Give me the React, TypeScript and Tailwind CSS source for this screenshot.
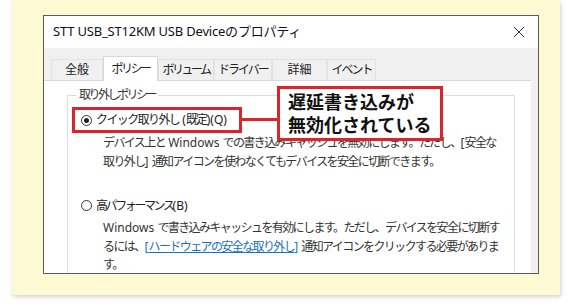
import React from "react";

const FONT = '"Noto Sans", "Noto Sans CJK JP", sans-serif';

function Radio({ checked }: { checked?: boolean }) {
  return (
    <span className="relative inline-flex h-[11px] w-[11px] shrink-0 items-center justify-center rounded-full border border-[#333] bg-white">
      {checked && <span className="h-[5px] w-[5px] rounded-full bg-[#222]" />}
    </span>
  );
}

function L({ children }: { children: React.ReactNode }) {
  return <span className="tracking-[0px]">{children}</span>;
}

function Tab({ label, selected, w, tr }: { label: string; selected?: boolean; w: string; tr: string }) {
  return selected ? (
    <div className={`${w} -mb-px z-10 flex h-[25px] items-center justify-center self-end border border-b-0 border-[#d9d9d9] bg-white`}>
      <span className={`${tr} whitespace-nowrap text-[12px] text-[#222]`}>{label}</span>
    </div>
  ) : (
    <div className={`${w} flex h-[21px] items-center justify-center self-end border border-b-0 border-[#e2e2e2]`}>
      <span className={`${tr} whitespace-nowrap text-[12px] text-[#222]`}>{label}</span>
    </div>
  );
}

export default function App() {
  return (
    <div className="relative h-[306px] w-[570px] overflow-hidden bg-white" style={{ fontFamily: FONT }}>
      <div className="ml-[12px] h-[295px] w-[548px] bg-[#fdf9d2] pl-[31px] pt-[15px] shadow-[1px_2px_4px_rgba(0,0,0,0.18)]">
        <div className="flex h-[259px] w-[496px] flex-col overflow-hidden border border-[#5a5a5a] bg-[#f0f0f0]">
          {/* title bar */}
          <div className="flex h-[32px] shrink-0 items-center justify-between bg-white pl-[9px] pr-[10px]">
            <span className="whitespace-nowrap text-[13px] tracking-[-0.2px] text-[#111]">STT USB_ST12KM USB Deviceのプロパティ</span>
            <svg width="12" height="12" viewBox="0 0 12 12" className="mr-[3px]">
              <path d="M1 1 L11 11 M11 1 L1 11" stroke="#333" strokeWidth="1" fill="none" />
            </svg>
          </div>
          {/* tabs */}
          <div className="flex h-[32px] shrink-0 items-end pl-[7px]">
            <Tab label="全般" w="w-[52px]" tr="tracking-[0px]" />
            <Tab label="ポリシー" w="w-[55px]" tr="tracking-[-2.5px]" selected />
            <Tab label="ボリューム" w="w-[56px]" tr="tracking-[-2.5px]" />
            <Tab label="ドライバー" w="w-[58px]" tr="tracking-[-2px]" />
            <Tab label="詳細" w="w-[55px]" tr="tracking-[0px]" />
            <Tab label="イベント" w="w-[49px]" tr="tracking-[-2px]" />
          </div>
          {/* panel */}
          <div className="mr-[7px] flex-1 border-t border-[#d9d9d9] bg-white pl-[23px] pt-[6px]">
            <fieldset className="w-[448px] border border-[#dcdcdc] pb-[20px]">
              <legend className="ml-[8px] px-[3px] text-[12px] leading-[16px] tracking-[-2.5px] text-[#333]">取り外しポリシー</legend>
              <div className="ml-[4px] mt-[4px] flex h-[26px] w-[170px] items-center gap-[4px] border-[3px] border-[#d8262c] pl-[6px]">
                <Radio checked />
                <span className="whitespace-nowrap text-[12px] tracking-[-1.6px] text-[#222]">
                  クイック取り外し<L> (</L>既定<L>)(Q)</L>
                </span>
              </div>
              <div className="ml-[35px] whitespace-nowrap text-[12px] leading-[19px] tracking-[-1.6px] text-[#333]">
                <div>
                  デバイス上と<L> Windows </L>での書き込みキャッシュを無効にします。ただし、<L>[</L>安全な
                </div>
                <div>
                  取り外し<L>] </L>通知アイコンを使わなくてもデバイスを安全に切断できます。
                </div>
              </div>
              <div className="ml-[13px] mt-[25px] flex h-[19px] items-center gap-[4px]">
                <Radio />
                <span className="whitespace-nowrap text-[12px] tracking-[-2.4px] text-[#222]">
                  高パフォーマンス<L>(B)</L>
                </span>
              </div>
              <div className="ml-[35px] mt-[4px] whitespace-nowrap text-[12px] leading-[18.5px] tracking-[-1.6px] text-[#333]">
                <div>
                  <L>Windows </L>で書き込みキャッシュを有効にします。ただし、デバイスを安全に切断す
                </div>
                <div>
                  るには、<span className="text-[#1a6fc4] underline"><L>[</L>ハードウェアの安全な取り外し<L>]</L></span><L> </L>通知アイコンをクリックする必要がありま
                </div>
                <div>す。</div>
              </div>
            </fieldset>
          </div>
        </div>
      </div>
      {/* annotation connector */}
      <div className="absolute left-[242px] top-[118px] h-[3px] w-[36px] bg-[#d8262c]" />
      {/* callout */}
      <div className="absolute left-[277px] top-[86px] flex h-[55px] w-[166px] flex-col justify-center border-[3px] border-[#d8262c] bg-white pl-[8px]">
        <div className="text-[18px] font-bold leading-[23px] text-[#111]">遅延書き込みが</div>
        <div className="text-[18px] font-bold leading-[23px] text-[#111]">無効化されている</div>
      </div>
    </div>
  );
}
